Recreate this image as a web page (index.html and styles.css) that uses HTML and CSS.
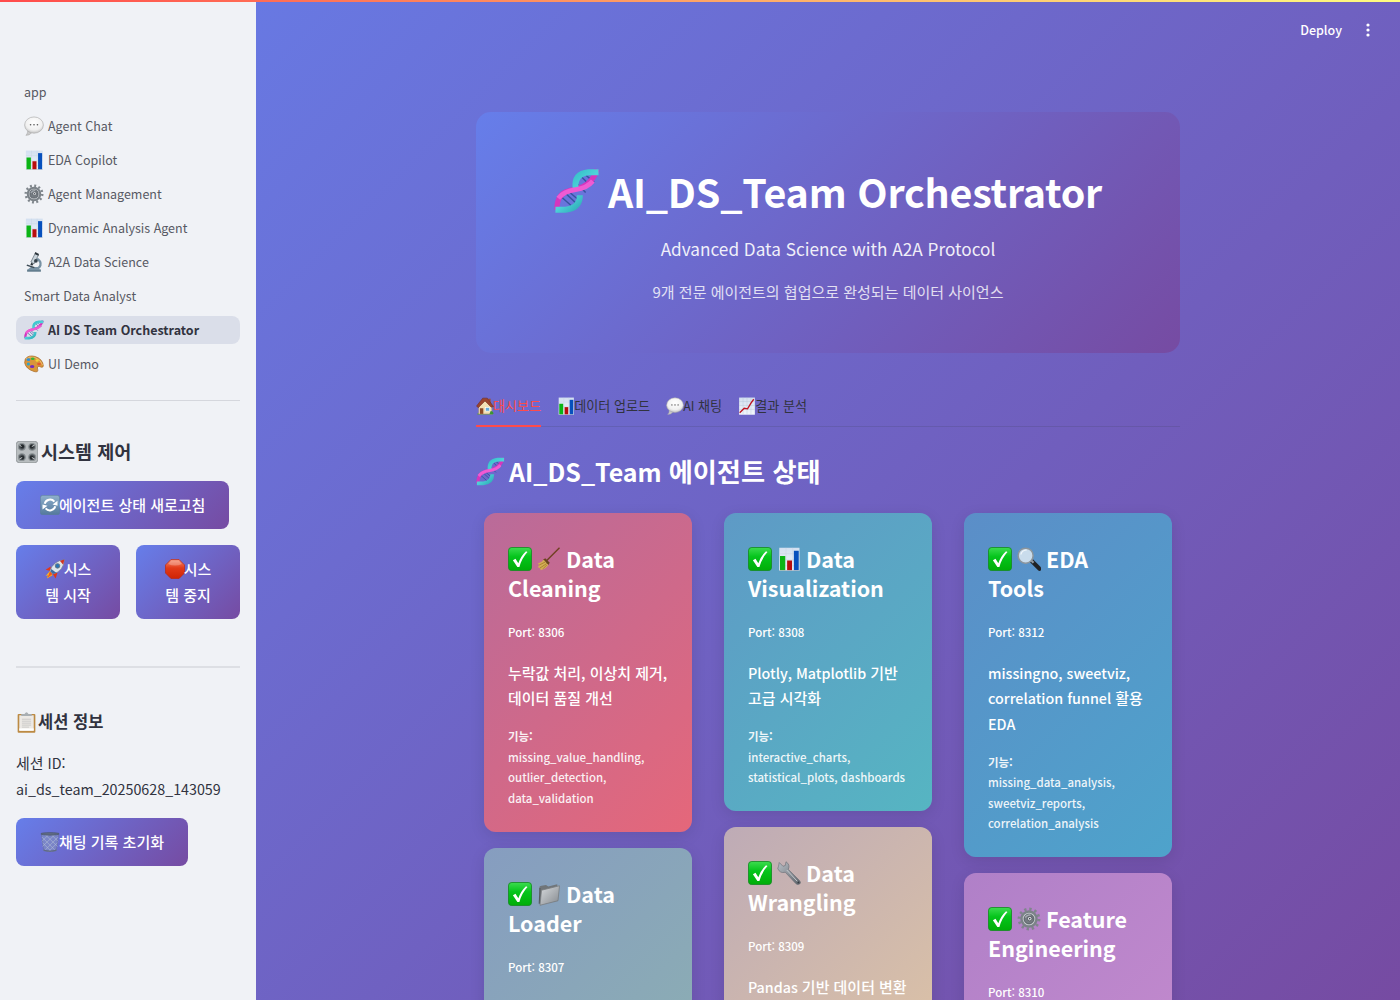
FILE: index.html
```html
<!DOCTYPE html>
<html lang="ko">
<head>
<meta charset="utf-8">
<title>AI DS Team Orchestrator</title>
<link rel="stylesheet" href="styles.css">
</head>
<body>
<svg class="sprite" width="0" height="0" aria-hidden="true">
  <defs>
    <linearGradient id="g-green" x1="0" y1="0" x2="0" y2="1"><stop offset="0" stop-color="#3ddc50"/><stop offset=".4" stop-color="#05c51c"/><stop offset="1" stop-color="#00ad08"/></linearGradient>
    <linearGradient id="g-paper" x1="0" y1="0" x2="0" y2="1"><stop offset="0" stop-color="#d3e0f0"/><stop offset="1" stop-color="#f2f6fb"/></linearGradient>
    <linearGradient id="g-metal" x1="0" y1="0" x2="1" y2="1"><stop offset="0" stop-color="#b9bfc6"/><stop offset=".5" stop-color="#8b9198"/><stop offset="1" stop-color="#5b6168"/></linearGradient>
    <linearGradient id="g-folder" x1="0" y1="0" x2="1" y2="1"><stop offset="0" stop-color="#d8dbde"/><stop offset="1" stop-color="#84898e"/></linearGradient>
    <linearGradient id="g-red" x1="0" y1="0" x2="0" y2="1"><stop offset="0" stop-color="#f58a6c"/><stop offset=".45" stop-color="#e23a18"/><stop offset="1" stop-color="#cf2405"/></linearGradient>
    <linearGradient id="g-blue" x1="0" y1="0" x2="0" y2="1"><stop offset="0" stop-color="#8fb0cc"/><stop offset="1" stop-color="#54799c"/></linearGradient>
    <linearGradient id="g-teal" x1="0" y1="0" x2="1" y2="1"><stop offset="0" stop-color="#23b3bb"/><stop offset=".5" stop-color="#4fd3da"/><stop offset="1" stop-color="#168e9c"/></linearGradient>
    <radialGradient id="g-bubble" cx=".5" cy=".35" r=".65"><stop offset="0" stop-color="#fff"/><stop offset=".7" stop-color="#f0f0f0"/><stop offset="1" stop-color="#c2c2c2"/></radialGradient>

    <symbol id="bubble" viewBox="0 0 32 32"><path d="M6 23Q6 28 3 31Q9 31 12 27Z" fill="#c9c9c9" stroke="#a9a9a9" stroke-width=".8"/><ellipse cx="16" cy="14.500" rx="15" ry="13" fill="url(#g-bubble)" stroke="#a9a9a9" stroke-width="1"/><g fill="#555"><circle cx="10.500" cy="14" r="1.300"/><circle cx="16" cy="14" r="1.300"/><circle cx="21.500" cy="14" r="1.300"/></g></symbol>
    <symbol id="chart" viewBox="0 0 32 32"><rect x="3" y="1" width="27" height="30.500" fill="url(#g-paper)"/><path d="M3 9H30M3 17H30M3 25H30M12 1V31M21 1V31" stroke="#c3d0e0" stroke-width=".5"/><rect x="4" y="12" width="7" height="19" fill="#0bb415"/><rect x="13.500" y="18" width="6.500" height="13" fill="#b80d0d"/><rect x="22.500" y="5" width="6.500" height="26" fill="#0750bd"/><path d="M3 31.300H30" stroke="#aab4c0" stroke-width=".8"/></symbol>
    <symbol id="gear" viewBox="0 0 32 32"><circle cx="16" cy="16" r="13.200" fill="none" stroke="#7f868c" stroke-width="4" stroke-dasharray="3.100 3.810"/><circle cx="16" cy="16" r="10" fill="#c4c9cd" stroke="#7b8288" stroke-width="3.200"/><circle cx="16" cy="16" r="6.500" fill="#747b82" stroke="#555b62" stroke-width="1.200"/><path d="M11 14Q14 10 18 11" fill="none" stroke="#a5abb1" stroke-width="2"/><circle cx="17" cy="15.500" r="3" fill="#e0e3e6" stroke="#464b50"/><circle cx="17" cy="15.500" r="1.100" fill="#414750"/></symbol>
    <symbol id="scope" viewBox="0 0 32 32"><path d="M5 28H27V31.500H5Z" fill="#5d7788"/><path d="M7 27L11 24H22Q26 21 24 16L20 12L22 9Q30 14 28 22Q27 25 24 27L27 29H6Z" fill="#7892a4"/><path d="M18 2L23 5L16 19L11 16Z" fill="#c9d3db" stroke="#4a5962"/><path d="M18 0L24 3L23 6L17 3Z" fill="#2b343b"/><path d="M12 17L15 19L13 22L10 20Z" fill="#2b343b"/><path d="M5 20L17 24L16 26L4 22Z" fill="#3d4b55"/><circle cx="19" cy="14" r="3" fill="#34414a"/></symbol>
    <symbol id="dna" viewBox="0 0 32 32"><g stroke-width="1" stroke="#35539f" fill="none"><path d="M5 20L14 28M8 17.500L17 26M11 17L18 23M15 10L22 17M18 5L25 12M21 4L28 10"/></g><path d="M2 29Q2 18 10 16L20 13Q27 10 30 1" fill="none" stroke="#d535bd" stroke-width="3.600"/><path d="M1 29H8Q18 28 18 19M15 14Q14 4 24 3H31" fill="none" stroke="url(#g-teal)" stroke-width="4.200"/><path d="M3 21Q7 16 15 15Q23 14 27 9" fill="none" stroke="#ef5bd3" stroke-width="3.300"/></symbol>
    <symbol id="palette" viewBox="0 0 32 32"><path d="M2 8Q7 1 18 4Q30 8 31 19Q30 23 25 20Q20 19 22 25Q23 30 16 28Q3 24 1 14Z" fill="#d9953b" stroke="#9d5e19"/><path d="M3 8Q9 3 18 6Q27 9 30 18" fill="none" stroke="#efbd6d" stroke-width="1.500"/><ellipse cx="7" cy="9" rx="3" ry="2.300" fill="#2f91db"/><ellipse cx="14" cy="7.500" rx="3" ry="2.100" fill="#35b434"/><ellipse cx="21" cy="10.500" rx="2.500" ry="2" fill="#f1d636"/><ellipse cx="7" cy="16" rx="2.500" ry="2.500" fill="#30a3c8"/><ellipse cx="13" cy="20" rx="3.600" ry="2.500" fill="#762cbb"/><ellipse cx="24" cy="16" rx="3" ry="2" fill="#e6572f"/></symbol>
    <symbol id="knobs" viewBox="0 0 32 32"><rect x=".5" y=".5" width="31" height="31" rx="4" fill="#b8bdbf" stroke="#858b8e"/><g fill="#555b5f" stroke="#8c9396" stroke-width="1.500"><circle cx="8.500" cy="8.500" r="5"/><circle cx="23.500" cy="8.500" r="5"/><circle cx="8.500" cy="23.500" r="5"/><circle cx="23.500" cy="23.500" r="5"/></g><g fill="#24292c"><circle cx="9" cy="8" r="2.800"/><circle cx="23" cy="8" r="2.800"/><circle cx="9" cy="24" r="2.800"/><circle cx="23" cy="24" r="2.800"/></g><path d="M8 8L5 6M23 8L27 6M9 24L5 26M23 24L27 26" stroke="#dce1e3" stroke-width="1.300"/></symbol>
    <symbol id="refresh" viewBox="0 0 32 32"><rect x=".5" y=".5" width="31" height="31" rx="4" fill="url(#g-blue)" stroke="#5b7d9c"/><g fill="none" stroke="#fff" stroke-width="3.200"><path d="M7.500 14A9 9 0 0 1 23 10.500"/><path d="M24.500 18A9 9 0 0 1 9 21.500"/></g><path d="M28 9V17L20 15ZM4 23V15L12 17Z" fill="#fff"/></symbol>
    <symbol id="rocket" viewBox="0 0 32 32"><path d="M8 19L1 27L5 26L3 31L12 26Z" fill="#ffb719"/><path d="M9 12L1 17L9 19ZM20 22L17 31L12 23Z" fill="#df371b"/><path d="M8 20L12 24L4 30Z" fill="#f05a1d"/><path d="M8 19Q13 3 31 1Q30 19 13 24Z" fill="#dde5ea" stroke="#76818c"/><path d="M24 3Q28 1 31 1L29 9Z" fill="#cf3524"/><path d="M9 20L13 24L18 22L10 16Z" fill="#3b6ea6"/><circle cx="20" cy="11" r="3.600" fill="#2776b6" stroke="#65727e" stroke-width="1.500"/></symbol>
    <symbol id="stop" viewBox="0 0 32 32"><path d="M9.500 .8H22.500L31.200 9.500V22.500L22.500 31.200H9.500L.8 22.500V9.500Z" fill="url(#g-red)" stroke="#bf2408"/><path d="M10 2.500H22L27 8Q16 13 5 8Z" fill="#fff" opacity=".25"/></symbol>
    <symbol id="clip" viewBox="0 0 32 32"><rect x="2.500" y="3" width="27" height="28.500" rx="1.500" fill="#bc8a43"/><rect x="5" y="5" width="22" height="23.500" fill="#ece9e5"/><path d="M5 25H27V28.500H5Z" fill="#fff"/><path d="M8 5V3H13Q16 -2 19 3H24V6H8Z" fill="#a9afb3"/><path d="M9 11H23M9 14H23M9 17H23M9 20H23M9 23H20" stroke="#cbcac8" stroke-width="1.500"/></symbol>
    <symbol id="trash" viewBox="0 0 32 32"><path d="M2 2L6 30Q16 33 26 30L30 2Z" fill="#8795bb" fill-opacity=".55" stroke="#66719b"/><path d="M3 8L25 30M4 17L18 31M8 4L28 23M18 4L29 15M29 8L7 30M28 17L14 31M24 4L4 23M14 4L3 15" stroke="#b3bfd6" stroke-width=".9"/><ellipse cx="16" cy="3" rx="14.500" ry="2" fill="#606c86" stroke="#465264"/><path d="M6 29Q16 32 26 29" fill="none" stroke="#606a84" stroke-width="2"/></symbol>
    <symbol id="house" viewBox="0 0 32 32"><path d="M3 29H30V31H2Z" fill="#5aa03a"/><path d="M22 3H26V12H22Z" fill="#a34d32"/><path d="M5 14L15 5L28 15V30H5Z" fill="#f3dfb4" stroke="#b79c72"/><path d="M1 16L12 2H20L31 17L27 18L16 7L4 19Z" fill="#9c442d" stroke="#712b1c"/><rect x="7" y="20" width="6" height="10" fill="#8d4b26"/><rect x="17" y="19" width="7" height="6" fill="#64aadb" stroke="#fff"/><path d="M26 25Q31 25 31 30H24Z" fill="#3c9632"/></symbol>
    <symbol id="trend" viewBox="0 0 32 32"><rect x="2" y="1" width="28" height="30.500" fill="url(#g-paper)"/><path d="M2 8H30M2 15H30M2 22H30M9 1V31M16 1V31M23 1V31" stroke="#b4c4d6" stroke-width=".7"/><path d="M3 28L11 20L17 21L23 11L28 4" fill="none" stroke="#bf1522" stroke-width="2.400"/></symbol>
    <symbol id="check" viewBox="0 0 32 32"><rect x=".6" y=".6" width="30.800" height="30.800" rx="4.500" fill="url(#g-green)" stroke="#168c25" stroke-width="1.200"/><path d="M6.500 17.500L10 15.500L13.800 21.500Q17 12 24 5.500L26 6.800Q18.500 15 15.200 26.500H12.500Z" fill="#fff"/></symbol>
    <symbol id="broom" viewBox="0 0 32 32"><path d="M30 1L13 18" stroke="#704021" stroke-width="2"/><path d="M11 15L17 21L15 24L8 17Z" fill="#69451f"/><path d="M9 17L15 24Q12 29 5 31L4 28L1 27L3 24L1 22Q6 21 9 17Z" fill="#d3ad55"/><path d="M3 24L11 20M4 28L13 22M8 29L13 24" stroke="#9c7528"/></symbol>
    <symbol id="lens" viewBox="0 0 32 32"><path d="M19 18L30 29" stroke="#202224" stroke-width="5.500" stroke-linecap="round"/><path d="M18 17L22 21" stroke="#8f979e" stroke-width="3"/><circle cx="11.500" cy="11.500" r="10" fill="#c9dcec" stroke="#8c959c" stroke-width="2"/><path d="M5 10Q7 4 13 4" fill="none" stroke="#f3f8fb" stroke-width="1.500"/></symbol>
    <symbol id="folder" viewBox="0 0 32 32"><path d="M3 8Q3 5 6 5L12 4L15 6L27 3L28 25L5 30Z" fill="#707579"/><path d="M6 11L30 5L28 25L4 31Z" fill="url(#g-folder)" stroke="#777b7e"/><path d="M4 8L3 29" stroke="#55595c" stroke-width="1.500"/></symbol>
    <symbol id="wrench" viewBox="0 0 32 32"><path d="M3 2L8 7L11 6L12 1Q18 5 15 11L30 26Q33 30 29 31Q27 32 25 30L11 15Q4 17 1 10L2 7Z" fill="url(#g-metal)" stroke="#666c73" stroke-width=".8"/><path d="M13 12L27 27" stroke="#c6cbd0" stroke-width="1.300"/><circle cx="28.500" cy="28.500" r="1.200" fill="#353b42"/></symbol>
  </defs>
</svg>

<div class="decoration"></div>
<div class="app">
  <aside class="sidebar">
    <nav class="nav">
      <a class="nav-item">app</a>
      <a class="nav-item"><svg class="emo"><use href="#bubble"/></svg>Agent Chat</a>
      <a class="nav-item"><svg class="emo"><use href="#chart"/></svg>EDA Copilot</a>
      <a class="nav-item"><svg class="emo"><use href="#gear"/></svg>Agent Management</a>
      <a class="nav-item"><svg class="emo"><use href="#chart"/></svg>Dynamic Analysis Agent</a>
      <a class="nav-item"><svg class="emo"><use href="#scope"/></svg>A2A Data Science</a>
      <a class="nav-item">Smart Data Analyst</a>
      <a class="nav-item active"><svg class="emo"><use href="#dna"/></svg>AI DS Team Orchestrator</a>
      <a class="nav-item"><svg class="emo"><use href="#palette"/></svg>UI Demo</a>
    </nav>
    <hr class="rule rule-nav">
    <h2 class="side-title control-title"><svg class="emo"><use href="#knobs"/></svg><span>시스템 제어</span></h2>
    <button class="btn"><svg class="emo"><use href="#refresh"/></svg>에이전트 상태 새로고침</button>
    <div class="btn-pair">
      <button class="btn tall"><span class="line"><svg class="emo"><use href="#rocket"/></svg>시스</span><span class="line">템 시작</span></button>
      <button class="btn tall"><span class="line"><svg class="emo"><use href="#stop"/></svg>시스</span><span class="line">템 중지</span></button>
    </div>
    <hr class="rule rule-section">
    <h3 class="side-title session-title"><svg class="emo"><use href="#clip"/></svg><span>세션 정보</span></h3>
    <p class="session"><span class="ko">세션</span> ID:<br>ai_ds_team_20250628_143059</p>
    <button class="btn"><svg class="emo"><use href="#trash"/></svg>채팅 기록 초기화</button>
  </aside>

  <main class="main">
    <header class="toolbar"><span>Deploy</span><svg class="kebab" viewBox="0 0 4 14"><circle cx="2" cy="2" r="1.600"/><circle cx="2" cy="7" r="1.600"/><circle cx="2" cy="12" r="1.600"/></svg></header>
    <div class="content">
      <section class="hero">
        <h1><svg class="emo"><use href="#dna"/></svg><span>AI_DS_Team Orchestrator</span></h1>
        <p class="lead">Advanced Data Science with A2A Protocol</p>
        <p class="sub">9개 전문 에이전트의 협업으로 완성되는 데이터 사이언스</p>
      </section>
      <div class="tabs">
        <div class="tab selected"><svg class="emo"><use href="#house"/></svg>대시보드</div>
        <div class="tab"><svg class="emo"><use href="#chart"/></svg>데이터 업로드</div>
        <div class="tab"><svg class="emo"><use href="#bubble"/></svg><span><span class="latin">AI</span> 채팅</span></div>
        <div class="tab"><svg class="emo"><use href="#trend"/></svg>결과 분석</div>
      </div>
      <h2 class="status-title"><svg class="emo"><use href="#dna"/></svg><span>AI_DS_Team <span class="ko">에이전트 상태</span></span></h2>
      <div class="grid">
        <div class="col">
          <article class="card cleaning">
            <h3><svg class="emo"><use href="#check"/></svg><svg class="emo"><use href="#broom"/></svg>Data<br>Cleaning</h3>
            <p class="port">Port: 8306</p>
            <p class="desc"><span class="ko">누락값 처리, 이상치 제거,<br>데이터 품질 개선</span></p>
            <p class="feat"><b>기능:</b><br>missing_value_handling,<br>outlier_detection,<br>data_validation</p>
          </article>
          <article class="card loader">
            <h3><svg class="emo"><use href="#check"/></svg><svg class="emo"><use href="#folder"/></svg>Data<br>Loader</h3>
            <p class="port">Port: 8307</p>
          </article>
        </div>
        <div class="col">
          <article class="card visual">
            <h3><svg class="emo"><use href="#check"/></svg><svg class="emo"><use href="#chart"/></svg>Data<br>Visualization</h3>
            <p class="port">Port: 8308</p>
            <p class="desc">Plotly, Matplotlib <span class="ko">기반<br>고급 시각화</span></p>
            <p class="feat"><b>기능:</b><br>interactive_charts,<br>statistical_plots, dashboards</p>
          </article>
          <article class="card wrangling">
            <h3><svg class="emo"><use href="#check"/></svg><svg class="emo"><use href="#wrench"/></svg>Data<br>Wrangling</h3>
            <p class="port">Port: 8309</p>
            <p class="desc">Pandas <span class="ko">기반 데이터 변환</span></p>
          </article>
        </div>
        <div class="col">
          <article class="card eda">
            <h3><svg class="emo"><use href="#check"/></svg><svg class="emo"><use href="#lens"/></svg>EDA<br>Tools</h3>
            <p class="port">Port: 8312</p>
            <p class="desc">missingno, sweetviz,<br>correlation funnel <span class="ko">활용</span><br>EDA</p>
            <p class="feat"><b>기능:</b><br>missing_data_analysis,<br>sweetviz_reports,<br>correlation_analysis</p>
          </article>
          <article class="card feature">
            <h3><svg class="emo"><use href="#check"/></svg><svg class="emo"><use href="#gear"/></svg>Feature<br>Engineering</h3>
            <p class="port">Port: 8310</p>
          </article>
        </div>
      </div>
    </div>
  </main>
</div>
</body>
</html>
```
FILE: styles.css
```css
* { box-sizing: border-box; }
body { margin: 0; height: 1000px; overflow: hidden; font-family: "Noto Sans CJK KR", "Noto Sans", sans-serif; font-size: 14.3px; line-height: 25.6px; color: #31333f; }
h1, h2, h3, p { margin: 0; }
.sprite { position: absolute; }
.ko { font-size: 1.048em; }
.emo { display: inline-block; width: 20px; height: 20px; flex: none; }

.decoration { position: absolute; top: 0; left: 0; right: 0; height: 2px; background: linear-gradient(90deg, #ff4b4b, #fffd80); z-index: 2; }
.app { display: flex; height: 1000px; overflow: hidden; background: linear-gradient(135deg, #667eea 0%, #764ba2 100%); }

.sidebar { width: 256px; flex: none; background: #f0f2f6; padding: 78px 16px 0; }
.nav { display: flex; flex-direction: column; gap: 6px; }
.nav-item { display: flex; align-items: center; gap: 4px; height: 28px; padding: 0 8px; border-radius: 8px; font-size: 12.500px; color: #575963; white-space: nowrap; }
.nav-item.active { background: #dadee9; color: #31333f; font-weight: 600; }
.rule { border: 0; margin: 0; background: #d5d7dd; }
.rule-nav { height: 1px; margin-top: 22px; }
.rule-section { height: 2px; margin-top: 47.500px; background: #dddfe4; }
.side-title { display: flex; align-items: center; font-weight: 600; }
.control-title { font-size: 18.500px; height: 28px; margin: 37px 0 15px; gap: 3px; }
.control-title .emo { width: 22px; height: 22px; }
.session-title { font-size: 16.500px; height: 28px; margin: 40px 0 14px; gap: 1px; }
.session-title .emo { width: 21px; height: 21px; }
.session { height: 54px; line-height: 26px; margin-bottom: 13.500px; white-space: nowrap; }
.btn { display: flex; align-items: center; width: max-content; height: 48px; padding: 0 24px; border: 0; border-radius: 8px; background: linear-gradient(135deg, #667eea, #764ba2); color: #fff; font: 500 15px/25.6px "Noto Sans CJK KR", sans-serif; white-space: nowrap; }
.btn .emo { margin-right: -1px; }
.btn-pair { display: grid; grid-template-columns: 1fr 1fr; gap: 16px; margin-top: 16px; }
.btn.tall { flex-direction: column; justify-content: center; width: auto; height: 73.500px; padding: 0; }
.line { display: flex; align-items: center; }

.main { flex: 1; min-width: 0; }
.toolbar { display: flex; justify-content: flex-end; align-items: center; gap: 24px; height: 60px; padding-right: 30px; color: #fff; font-size: 12.500px; font-weight: 500; }
.kebab { width: 4px; height: 14px; fill: #fff; }
.content { width: 704px; margin: 52px auto 0; }
.hero { height: 241px; padding-top: 52px; border-radius: 15px; background: linear-gradient(135deg, #667eea, #764ba2); color: #fff; text-align: center; }
.hero h1 { display: flex; justify-content: center; align-items: center; gap: 8px; height: 53px; font-size: 39.400px; font-weight: 700; letter-spacing: -.2px; white-space: nowrap; }
.hero h1 .emo { width: 46px; height: 46px; }
.lead { margin-top: 18px; font-size: 17.200px; line-height: 28px; opacity: .9; }
.sub { margin-top: 16px; font-size: 15px; opacity: .8; }
.tabs { display: flex; gap: 16px; height: 41px; margin-top: 33px; border-bottom: 1px solid rgba(49,51,63,.15); }
.tab { display: flex; align-items: center; height: 41px; border-bottom: 2px solid transparent; font-size: 13.100px; white-space: nowrap; }
.tab .emo { width: 18px; height: 18px; margin-right: -1px; }
.tab .latin { font-size: 12.500px; }
.tab.selected { color: #ff4b4b; border-color: #ff4b4b; }
.status-title { display: flex; align-items: center; gap: 4px; height: 34px; margin-top: 27px; color: #fff; font-size: 25px; line-height: 34px; font-weight: 600; white-space: nowrap; }
.status-title .emo { width: 29px; height: 29px; }

.grid { display: grid; grid-template-columns: repeat(3, 1fr); gap: 16px; padding: 24.500px 8px 0; column-gap: 32px; }
.col { display: flex; flex-direction: column; gap: 16px; }
.card { padding: 31px 24px 23.500px; border-radius: 12px; color: #fff; box-shadow: 0 4px 15px rgba(0,0,0,.1); white-space: nowrap; font-weight: 500; }
.card h3 { height: 59px; font-size: 21.500px; line-height: 29px; font-weight: 600; }
.card h3 .emo { width: 24px; height: 24px; margin-right: 5px; vertical-align: -3px; }
.port { margin-top: 19px; font-size: 11.500px; line-height: 21px; }
.desc { margin-top: 17px; }
.feat { margin-top: 15.500px; font-size: 11.450px; line-height: 20.500px; opacity: .9; }
.cleaning { background: linear-gradient(135deg, #b96b9a, #e5677a); }
.visual { background: linear-gradient(135deg, #5e9ac6, #56b5c2); }
.eda { background: linear-gradient(135deg, #5b8ec8, #4ea3cb); }
.loader { height: 320px; background: linear-gradient(135deg, #869dc0, #8db2b0); }
.wrangling { height: 300px; background: linear-gradient(135deg, #beabb6, #e1c6a3); }
.feature { height: 346px; background: linear-gradient(135deg, #b080c8, #c98dcf); }
```
